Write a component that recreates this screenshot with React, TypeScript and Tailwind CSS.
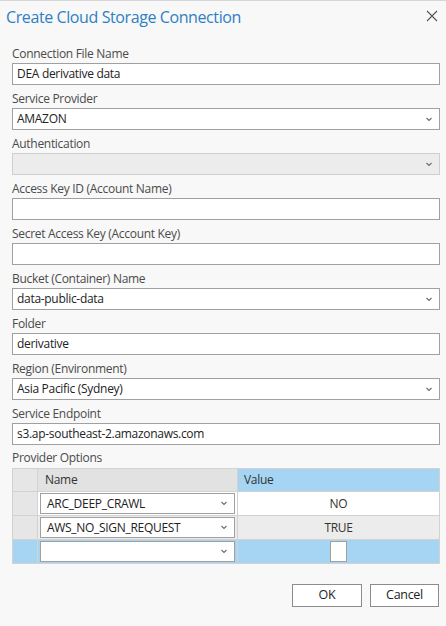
import React from "react";

const font = { fontFamily: '"Open Sans", "Noto Sans", sans-serif' };

function Chevron() {
  return (
    <svg width="8" height="5" viewBox="0 0 8 5" className="shrink-0">
      <path d="M1.5 1 L4 3.5 L6.5 1" fill="none" stroke="#6b6b6b" strokeWidth="1.1" />
    </svg>
  );
}

function Field({ label, value, select, disabled }: { label: string; value?: string; select?: boolean; disabled?: boolean }) {
  return (
    <div className="mb-[4px]">
      <div className="h-[19px] text-[12px] leading-[17px] tracking-[-0.3px] text-[#4b4b4b] pt-[1px]">{label}</div>
      <div
        className={
          "h-[22px] border flex items-center pl-[4px] pr-[6px] text-[12px] tracking-[-0.3px] text-[#222] " +
          (disabled ? "bg-[#ececec] border-[#cfcfcf]" : "bg-white border-[#a0a0a0]")
        }
      >
        <span className="flex-1 truncate">{value}</span>
        {select && <Chevron />}
      </div>
    </div>
  );
}

function NameCell({ value }: { value: string }) {
  return (
    <div className="h-full flex items-center px-[2px]">
      <div className="h-[21px] w-full bg-white border border-[#a0a0a0] flex items-center pl-[6px] pr-[6px] text-[12px] tracking-[-0.3px] text-[#222]">
        <span className="flex-1 truncate">{value}</span>
        <Chevron />
      </div>
    </div>
  );
}

export default function App() {
  return (
    <div style={font} className="w-[446px] h-[626px] bg-[#f7f8f7] border-t border-[#d6d6d6] relative overflow-hidden">
      <div className="h-[43px] flex items-start justify-between pl-[6px] pr-[8px] pt-[4px]">
        <div className="text-[16px] leading-[24px] tracking-[-0.4px] text-[#2f7fc4]">Create Cloud Storage Connection</div>
        <svg width="12" height="12" viewBox="0 0 12 12" className="mt-[5px]">
          <path d="M1 1 L11 11 M11 1 L1 11" stroke="#555" strokeWidth="1.1" />
        </svg>
      </div>
      <div className="pl-[12px] pr-[6px]">
        <Field label="Connection File Name" value="DEA derivative data" />
        <Field label="Service Provider" value="AMAZON" select />
        <Field label="Authentication" select disabled />
        <Field label="Access Key ID (Account Name)" />
        <Field label="Secret Access Key (Account Key)" />
        <Field label="Bucket (Container) Name" value="data-public-data" select />
        <Field label="Folder" value="derivative" />
        <Field label="Region (Environment)" value="Asia Pacific (Sydney)" select />
        <Field label="Service Endpoint" value="s3.ap-southeast-2.amazonaws.com" />
        <div className="h-[19px] text-[12px] leading-[17px] tracking-[-0.3px] text-[#4b4b4b]">Provider Options</div>
        <div className="border border-[#d2d2d2] grid grid-cols-[25px_200px_1fr] text-[12px] tracking-[-0.3px] text-[#333]">
          <div className="h-[23px] bg-[#e6e6e6] border-r border-b border-[#d2d2d2]" />
          <div className="h-[23px] bg-[#e2e2e2] border-r border-b border-[#d2d2d2] flex items-center pl-[7px]">Name</div>
          <div className="h-[23px] bg-[#a5d5f2] border-b border-[#d2d2d2] flex items-center pl-[6px]">Value</div>

          <div className="h-[24px] bg-[#e6e6e6] border-r border-b border-[#d2d2d2]" />
          <div className="h-[24px] bg-white border-r border-b border-[#d2d2d2]">
            <NameCell value="ARC_DEEP_CRAWL" />
          </div>
          <div className="h-[24px] bg-white border-b border-[#d2d2d2] flex items-center justify-center">NO</div>

          <div className="h-[24px] bg-[#e6e6e6] border-r border-b border-[#d2d2d2]" />
          <div className="h-[24px] bg-[#ececec] border-r border-b border-[#d2d2d2]">
            <NameCell value="AWS_NO_SIGN_REQUEST" />
          </div>
          <div className="h-[24px] bg-[#ececec] border-b border-[#d2d2d2] flex items-center justify-center">TRUE</div>

          <div className="h-[23px] bg-[#a5d5f2] border-r border-[#d2d2d2]" />
          <div className="h-[23px] bg-[#a5d5f2] border-r border-[#d2d2d2]">
            <NameCell value="" />
          </div>
          <div className="h-[23px] bg-[#a5d5f2] flex items-center justify-center">
            <div className="w-[17px] h-[21px] bg-white border border-[#a0a0a0]" />
          </div>
        </div>
        <div className="flex justify-end gap-[8px] mt-[20px] pr-[1px]">
          <button className="w-[70px] h-[23px] bg-white border border-[#8c8c8c] text-[12.5px] tracking-[-0.3px] text-[#222]">OK</button>
          <button className="w-[69px] h-[23px] bg-white border border-[#8c8c8c] text-[12.5px] tracking-[-0.3px] text-[#222]">Cancel</button>
        </div>
      </div>
    </div>
  );
}
